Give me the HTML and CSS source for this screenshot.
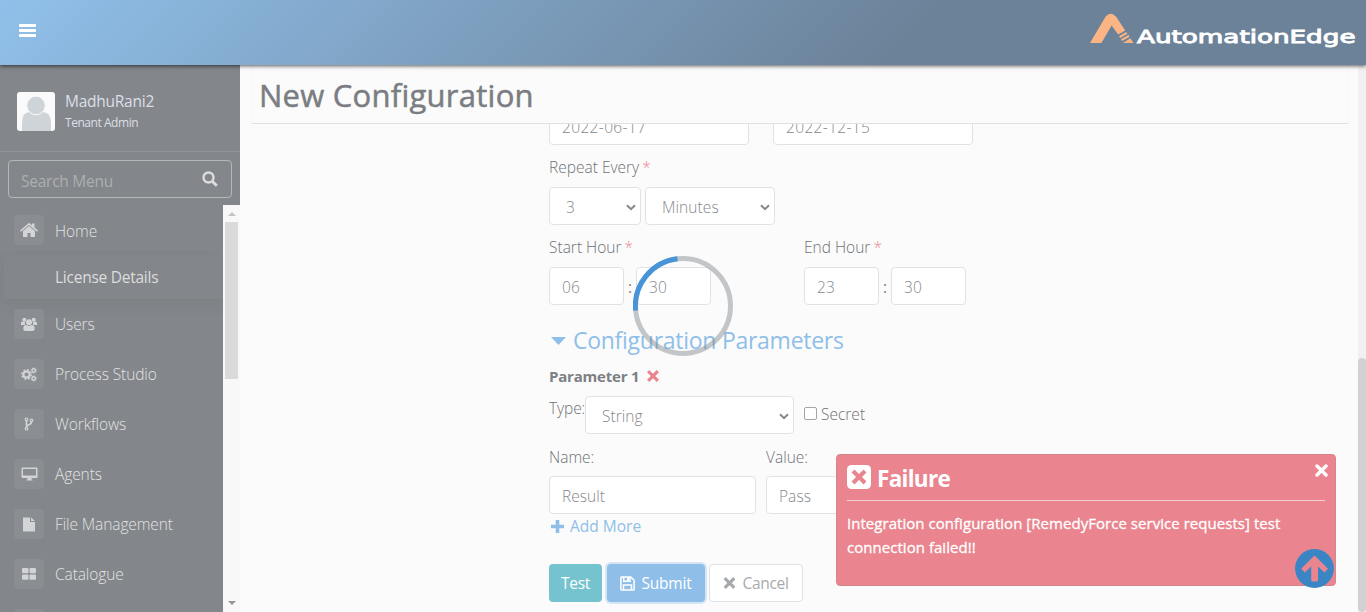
FILE: index.html
```html
<!DOCTYPE html>
<html lang="en">
<head>
<meta charset="utf-8">
<title>New Configuration</title>
<link rel="stylesheet" href="styles.css">
</head>
<body>
<svg class="defs" width="0" height="0">
  <symbol id="chev" viewBox="0 0 10 7"><path d="M1 1.2l4 4 4-4" fill="none" stroke="currentColor" stroke-width="2"/></symbol>
  <symbol id="times" viewBox="0 0 12 12"><path d="M2.3 2.3l7.4 7.4M9.7 2.3l-7.4 7.4" fill="none" stroke="currentColor" stroke-width="3.2" stroke-linecap="square"/></symbol>
</svg>
<header class="topbar">
  <svg class="burger" width="17" height="14" viewBox="0 0 17 14" fill="#fff"><rect width="17" height="3" rx=".7"/><rect y="5" width="17" height="3" rx=".7"/><rect y="10" width="17" height="3" rx=".7"/></svg>
  <svg class="logo" width="268" height="38" viewBox="0 0 268 38">
    <path d="M0 31L15.500 4.800Q20.500-1.500 26.200 4.800L35.200 18.500L28.200 22.500L21.600 13.400L11.400 31Z" fill="#fbb584"/>
    <path d="M29 24.200l7.200-4.200 1.200 1.700-7.200 4.200zM31 27.200l7.400-4.200 1.200 1.800-7.500 4.200zM33 31l7.400-4.800 3 4.800z" fill="#fbb584"/>
    <text x="47" y="30.500" class="logo-text" textLength="218.500" lengthAdjust="spacingAndGlyphs">AutomationEdge</text>
  </svg>
</header>
<div class="body">
  <aside class="sidebar">
    <div class="user">
      <svg width="38" height="39" viewBox="0 0 38 39"><rect width="38" height="39" rx="3" fill="#fafafa"/><path d="M5 39V31Q5 20 13 20h12q9 0 9 11v8z" fill="#cfd4d9"/><circle cx="19" cy="13.500" r="9.300" fill="#cfd4d9" stroke="#fafafa"/></svg>
      <div><div class="user-name">MadhuRani2</div><div class="user-role">Tenant Admin</div></div>
    </div>
    <div class="search"><span>Search Menu</span><svg width="16" height="16" viewBox="0 0 16 16" fill="none" stroke="#dcdcdc" stroke-width="2.400"><circle cx="6.500" cy="6.500" r="5"/><path d="M10.200 10.200l4.600 4.600" stroke-width="3"/></svg></div>
    <div class="menu-wrap">
      <nav class="menu">
        <div class="item home"><i><svg width="18" height="16" viewBox="0 0 18 16"><path d="M0 8.500L9 .8l3 2.500V1.500h2.500v4L18 8.500l-1 1.200L9 3 1 9.700z"/><path d="M3 9l6-5 6 5v6h-4.500v-4h-3v4H3z"/></svg></i><span>Home</span></div>
        <div class="sub"><span>License Details</span></div>
        <div class="item"><i><svg width="16" height="15" viewBox="0 0 16 15"><circle cx="3.300" cy="2.700" r="2"/><circle cx="12.700" cy="2.700" r="2"/><path d="M0 8V6q0-1.700 1.500-1.500l2.800.4q-1 1.500-.3 3.100H0zM16 8V6q0-1.700-1.500-1.500l-2.800.4q1 1.500.3 3.100h4z"/><circle cx="8" cy="5.300" r="3"/><path d="M2.300 12q0-4 2.700-4l3 1 3-1q2.700 0 2.700 4 0 2-2 2H4.300q-2 0-2-2z"/></svg></i><span>Users</span></div>
        <div class="item"><i><svg width="16" height="15" viewBox="0 0 16 15" fill="none" stroke="#d3d4d5"><circle cx="5.500" cy="7.500" r="3.200" stroke-width="2.300"/><circle cx="5.500" cy="7.500" r="4.800" stroke-width="1.300" stroke-dasharray="1.900 1.870"/><circle cx="12.700" cy="3.500" r="1.700" stroke-width="1.400"/><circle cx="12.700" cy="3.500" r="2.700" stroke-width=".8" stroke-dasharray="1.100 1.020"/><circle cx="12.700" cy="11.500" r="1.700" stroke-width="1.400"/><circle cx="12.700" cy="11.500" r="2.700" stroke-width=".8" stroke-dasharray="1.100 1.020"/></svg></i><span>Process Studio</span></div>
        <div class="item"><i><svg width="10" height="14" viewBox="0 0 10 14" fill="none" stroke="#d3d4d5" stroke-width="1.200"><circle cx="2.500" cy="2.300" r="1.300"/><circle cx="7.500" cy="3.300" r="1.300"/><circle cx="2.500" cy="11.700" r="1.300"/><path d="M2.500 3.600v6.800M7.500 4.600q0 2.400-2.500 3.100T2.600 10" stroke-width="1.700"/></svg></i><span>Workflows</span></div>
        <div class="item"><i><svg width="17" height="14" viewBox="0 0 17 14"><path d="M1.500.5h14q1 0 1 1v8.500q0 1-1 1H10.500V12.500h1v1h-6v-1h1V11h-5q-1 0-1-1V1.500q0-1 1-1zM2 2v6.500h13V2z" fill-rule="evenodd"/></svg></i><span>Agents</span></div>
        <div class="item"><i><svg width="14" height="15" viewBox="0 0 14 15"><path d="M1 .5h7V5h5v9.500H1zM9 .5L13 4H9z"/></svg></i><span>File Management</span></div>
        <div class="item"><i><svg width="14" height="12" viewBox="0 0 14 12"><rect width="6.500" height="5.300" rx="1"/><rect x="7.500" width="6.500" height="5.300" rx="1"/><rect y="6.400" width="6.500" height="5.300" rx="1"/><rect x="7.500" y="6.400" width="6.500" height="5.300" rx="1"/></svg></i><span>Catalogue</span></div>
        <div class="item"><i></i></div>
      </nav>
      <div class="menu-scroll"><b class="up"></b><div class="menu-thumb"></div><b class="down"></b></div>
    </div>
  </aside>
  <main class="main">
    <h1 class="title"><span>New Configuration</span></h1>
    <section class="form">
      <div class="row dates"><div class="field w200">2022-06-17</div><div class="field w200">2022-12-15</div></div>
      <div class="label rep"><span>Repeat Every</span> <em>*</em></div>
      <div class="row selects"><div class="field select w92"><span>3</span><svg width="10" height="7"><use href="#chev"/></svg></div><div class="field select w130"><span class="wide">Minutes</span><svg width="10" height="7"><use href="#chev"/></svg></div></div>
      <div class="row hours">
        <div class="hour"><div class="label"><span>Start Hour</span> <em>*</em></div><div class="row"><div class="field w75">06</div><b>:</b><div class="field w75">30</div></div></div>
        <div class="hour"><div class="label"><span>End Hour</span> <em>*</em></div><div class="row"><div class="field w75">23</div><b>:</b><div class="field w75">30</div></div></div>
      </div>
      <h2 class="section"><svg width="15" height="8" viewBox="0 0 15 8"><path d="M0 0h15L7.500 8z" fill="currentColor"/></svg><span>Configuration Parameters</span></h2>
      <div class="param"><span>Parameter 1</span><svg width="12" height="12"><use href="#times"/></svg></div>
      <div class="row type"><span class="type-label">Type:</span><div class="field select w209"><span>String</span><svg width="10" height="7"><use href="#chev"/></svg></div><div class="check"></div><span class="secret">Secret</span></div>
      <div class="row values">
        <div><div class="label">Name:</div><div class="field w207">Result</div></div>
        <div><div class="label">Value:</div><div class="field w207">Pass</div></div>
      </div>
      <div class="add"><svg width="13" height="13" viewBox="0 0 13 13"><path d="M6.500 0v13M0 6.500h13" stroke="currentColor" stroke-width="3.600"/></svg><span>Add More</span></div>
      <div class="row buttons">
        <div class="btn test">Test</div>
        <div class="btn submit"><svg width="15" height="15" viewBox="0 0 15 15" fill="none" stroke="#fff" stroke-width="1.500"><path d="M1.500.9h9.300l3.300 3.300v9.100q0 .8-.8.800H1.700q-.8 0-.8-.8V1.500q0-.6.6-.6z"/><path d="M3.700 1v4.200h6.300V1M3.500 14V9h8v5"/><path d="M8 1.500v3" stroke-width="2"/></svg><span>Submit</span></div>
        <div class="btn cancel"><svg width="13" height="12" viewBox="0 0 12 12"><use href="#times"/></svg><span>Cancel</span></div>
      </div>
    </section>
  </main>
  <div class="page-scroll"><div></div></div>
</div>
<svg class="spinner" width="100" height="100" viewBox="0 0 100 100" fill="none" stroke-width="5"><circle cx="50" cy="50" r="47.500" stroke="#7f8489" stroke-opacity=".45"/><path d="M2.600 54.500A47.500 47.500 0 0 1 44.500 2.800" stroke="#4794d8"/></svg>
<div class="toast">
  <svg class="close" width="13" height="13" viewBox="0 0 13 13"><path d="M2 2l9 9M11 2l-9 9" stroke="#fff" stroke-width="3.400" stroke-linecap="round"/></svg>
  <div class="toast-head"><svg width="24" height="24" viewBox="0 0 24 24"><rect width="24" height="24" rx="4.500" fill="#fff"/><path d="M7.500 7.500l9 9M16.500 7.500l-9 9" stroke="#e9858f" stroke-width="4.200" stroke-linecap="square"/></svg><span>Failure</span></div>
  <p><span>Integration configuration [RemedyForce service requests] test</span><br><span>connection failed!!</span></p>
</div>
<svg class="top-btn" width="39" height="39" viewBox="0 0 39 39"><circle cx="19.500" cy="19.500" r="19.400" fill="#3c85c4"/><path d="M19.500 6.500L33 19.800l-3.500 3.700L23 17.500V31q0 1.500-1.500 1.500h-3.800q-1.500 0-1.500-1.500V17.500l-6.500 6-3.500-3.700z" fill="#e9858f"/></svg>
</body>
</html>
```

FILE: styles.css
```css
* { box-sizing: border-box; }
body { margin: 0; width: 1366px; height: 612px; overflow: hidden; position: relative; display: flex; flex-direction: column; background: #fbfbfb; color: #7d8084; font: 400 15.500px/24px "Open Sans", "Noto Sans", sans-serif; }
.defs { position: absolute; }
svg { display: block; flex: none; }
span, em, b { white-space: nowrap; }
.topbar { height: 65px; flex: none; display: flex; justify-content: space-between; padding: 0 8px 0 19px; background: linear-gradient(135deg, #90c0ea 0, #6c8299 66%); box-shadow: 0 1px 4px rgba(0,0,0,.65); z-index: 2; }
.burger { margin-top: 24px; }
.logo { margin-top: 12px; }
.logo-text { font: 400 18px "DejaVu Sans", sans-serif; fill: #fff; stroke: #fff; stroke-width: .9px; }
.body { flex: 1; min-height: 0; display: flex; }
.sidebar { width: 240px; flex: none; background: #83868a; display: flex; flex-direction: column; color: #d3d4d5; }
.user { height: 87px; flex: none; padding: 26px 17px 0; display: flex; gap: 10px; border-bottom: 1px solid #909396; }
.user svg { margin-top: 1px; }
.user-name { color: #dcdfe8; line-height: 20px; letter-spacing: -.25px; }
.user-role { color: #dcdfe8; font-size: 12px; line-height: 23px; letter-spacing: -.45px; }
.search { height: 38px; flex: none; margin: 8px 8px 7px; padding: 0 13px 0 12px; border: 1px solid #b5b7b9; border-radius: 4px; display: flex; align-items: center; justify-content: space-between; color: #adafb1; letter-spacing: -.25px; }
.search span { padding-top: 3px; }
.menu-wrap { flex: 1; min-height: 0; display: flex; }
.menu { width: 223px; overflow: hidden; }
.item { height: 50px; padding-left: 14px; display: flex; align-items: center; gap: 11px; font-weight: 300; color: #e2e3e4; letter-spacing: -.1px; }
.item span { padding-bottom: 1px; }
.home span { padding: 2px 0 0; }
.item i { width: 30px; height: 30px; border-radius: 4px; background: #8a8d91; display: flex; align-items: center; justify-content: center; fill: #d3d4d5; }
.sub { height: 44px; margin-left: 4px; padding-left: 51px; line-height: 45px; letter-spacing: -.25px; box-shadow: 0 6px 14px rgba(60,60,60,.08); color: #dcddde; }
.menu-scroll { width: 17px; background: #f8f8f8; display: flex; flex-direction: column; align-items: center; }
.up { border: 4px solid transparent; border-top: 0; border-bottom-color: #c5c5c5; margin: 7px 0 6px; }
.down { border: 4px solid transparent; border-bottom: 0; border-top-color: #969696; margin: auto 0 7px; }
.menu-thumb { width: 13px; height: 157px; background: #dadada; }
.main { width: 1118px; display: flex; flex-direction: column; }
.title { flex: none; height: 59px; margin: 0 9px 0 11px; padding-left: 7px; border-bottom: 1px solid #dfe1e3; border-left: 1px solid #f6f6f6; border-right: 1px solid #f6f6f6; font-size: 31px; line-height: 60px; font-weight: 400; -webkit-text-stroke: .5px #7a7d82; color: #7a7d82; letter-spacing: .25px; }
.form { flex: 1; min-height: 0; padding-left: 309px; overflow: hidden; }
.row { display: flex; }
.field { height: 38px; flex: none; border: 1px solid #e0e2e6; border-radius: 4px; background: #fff; color: #85888b; font-weight: 300; line-height: 39px; padding-left: 12px; letter-spacing: .05px; }
.wide { letter-spacing: .1px; }
.w200 { width: 200px; } .w92 { width: 92px; } .w130 { width: 130px; } .w75 { width: 75px; } .w209 { width: 209px; } .w207 { width: 207px; }
.select { display: flex; justify-content: space-between; padding: 0 4px 0 16px; }
.select svg { margin-top: 16px; color: #85888b; }
.dates { margin-top: -17px; gap: 24px; }
.dates .field { letter-spacing: .35px; }
.label { height: 24px; font-weight: 300; color: #6e7175; letter-spacing: 0; }
.label em { color: #ea858f; font-style: normal; margin-left: -1px; }
.rep { margin-top: 10px; }
.selects { margin-top: 8px; gap: 4px; }
.hours { margin-top: 10px; gap: 93px; }
.hour .row { margin-top: 8px; }
.hour b { width: 12px; text-align: center; font-weight: 400; line-height: 40px; }
.section { margin: 19px 0 0 2px; height: 29px; display: flex; align-items: center; gap: 7px; color: #8fbfe9; font-size: 23px; line-height: 29px; font-weight: 400; letter-spacing: -.27px; }
.section span { padding-bottom: 1px; }
.param { margin-top: 9px; height: 24px; display: flex; align-items: center; gap: 8px; font-weight: 700; font-size: 15px; letter-spacing: -.2px; }
.param svg { color: #ea858f; }
.type { margin-top: 8px; height: 38px; }
.type-label { width: 36px; letter-spacing: -.1px; font-weight: 300; color: #6e7175; }
.check { width: 13px; height: 13px; margin: 11px 4px 0 10px; border: 1px solid #a5a5a5; border-radius: 2px; background: #fff; }
.secret { font-weight: 300; color: #6e7175; line-height: 37px; }
.values { margin-top: 11px; gap: 10px; }
.values .field { margin-top: 7px; }
.add { margin: 0 0 0 2px; height: 24px; display: flex; align-items: center; gap: 6px; color: #8fbfe9; }
.buttons { margin-top: 26px; }
.btn { height: 38px; border-radius: 4px; display: flex; align-items: center; justify-content: center; color: #fff; }
.test { width: 53px; background: #74c3ce; margin-right: 5px; letter-spacing: -.3px; }
.submit { width: 98px; background: #8fbfe8; gap: 6px; box-shadow: 0 0 0 2px #d4e6f6; margin-right: 4px; letter-spacing: -.2px; }
.cancel { width: 94px; background: #fff; border: 1px solid #dfe1e6; color: #a7aaad; gap: 6px; letter-spacing: -.3px; }
.page-scroll { width: 8px; background: #f1f1f1; padding-top: 293px; }
.page-scroll div { height: 254px; border-radius: 4px; background: #d2d2d2; }
.spinner { position: absolute; left: 633px; top: 256px; }
.toast { position: absolute; left: 836px; top: 454px; width: 500px; height: 132px; background: #ea858f; border: 1px solid #d5858c; border-radius: 4px; padding: 10px; color: #fff; }
.toast-head { height: 36px; border-bottom: 1px solid #f3cfd2; display: flex; gap: 6px; font-size: 22.500px; line-height: 27px; font-weight: 700; letter-spacing: -.7px; }
.toast p { margin: 10px 0 0; -webkit-text-stroke: .3px #fff; font-size: 15px; letter-spacing: .04px; }
.close { position: absolute; right: 7px; top: 9px; }
.top-btn { position: absolute; left: 1295px; top: 549px; }
```
